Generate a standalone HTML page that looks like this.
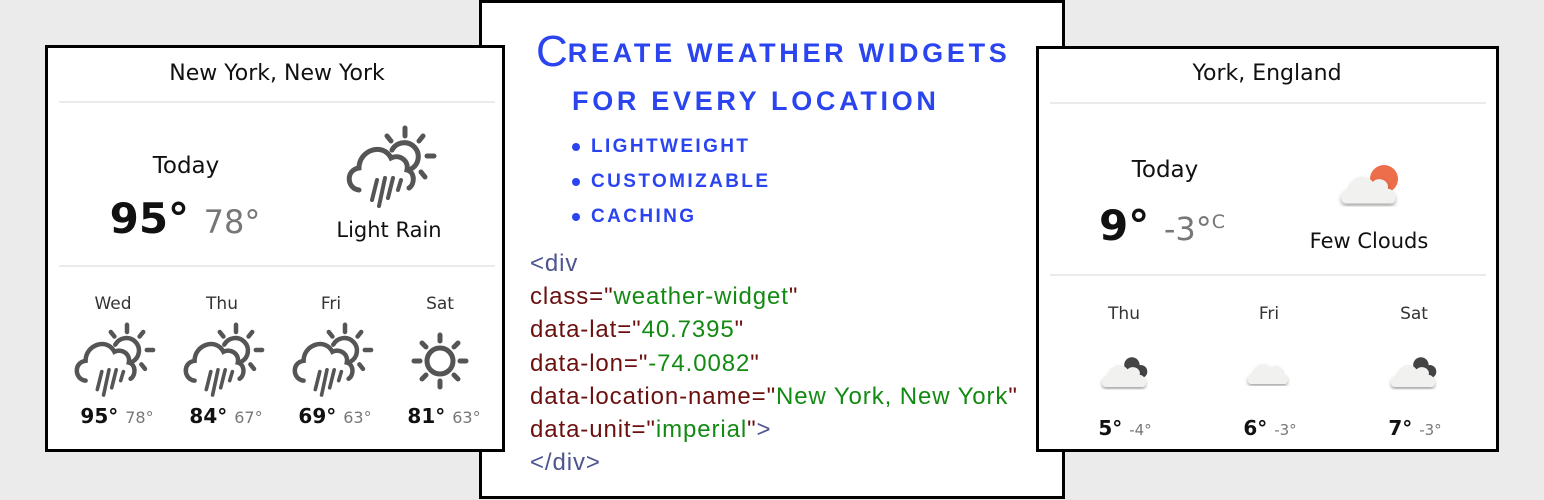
<!DOCTYPE html>
<html><head><meta charset="utf-8"><style>
*{margin:0;padding:0;box-sizing:border-box}
body{width:1544px;height:500px;background:#ebebeb;position:relative;overflow:hidden;font-family:"DejaVu Sans","Liberation Sans",sans-serif}
.card{position:absolute;background:#fff;border:3px solid #000}
.t{position:absolute;white-space:nowrap;transform:translateX(-50%);color:#111}
.sep{position:absolute;height:2px;background:#ebebeb}
svg{position:absolute;overflow:visible}
.mid{font-family:"Liberation Sans",sans-serif}
.mid .ttl{position:absolute;color:#2a44f0;font-weight:bold;white-space:nowrap;letter-spacing:3.7px}
.bul{position:absolute;left:109px;color:#2a44f0;font-weight:bold;font-size:19px;letter-spacing:2.4px}
.bul:before{content:"";position:absolute;left:-19px;top:7px;width:8px;height:8px;border-radius:50%;background:#2a44f0}
.code{position:absolute;left:48px;top:244px;font-size:24px;line-height:33.2px;color:#6b0f0f;letter-spacing:0.9px}
.tg{color:#4c5491}.s{color:#138a13}
.g{color:#777;font-weight:normal}
</style></head><body>
<svg width="0" height="0" style="position:absolute">
<defs>
<g id="rain" fill="none" stroke="#555" stroke-linecap="round">
<path d="M47 24 A14 14 0 1 1 66 43" stroke-width="5"/>
<path d="M60 2 V10 M42 10 L46 15 M78 10 L74 15 M82 30 H89 M76 46 L80 51" stroke-width="5"/>
<path d="M14 64 C2 63 0 44 14 42 C14 24 38 16 46 32 C54 28 64 34 62 44 C70 46 70 58 64 62" stroke-width="5"/>
<path d="M32 54 L27 74 M40 52 L34 80 M48 52 L43 72 M56 54 L53 64" stroke-width="4"/>
</g>
<g id="sun" fill="none" stroke="#555" stroke-linecap="round" stroke-width="5">
<circle cx="40" cy="40" r="13"/>
<path d="M40 14V20 M40 60V66 M14 40H20 M60 40H66 M22 22L26 26 M58 22L54 26 M22 58L26 54 M58 58L54 54"/>
</g>
<filter id="sh"><feDropShadow dx="0" dy="2" stdDeviation="1.5" flood-opacity="0.35"/></filter>
<g id="cl" filter="url(#sh)"><path d="M6 30 C0 30 0 20 8 19 C9 10 20 7 25 14 C30 9 38 14 36 19 C42 19 44 30 38 30 Z" fill="#f1f1ef"/></g>
<g id="cld"><circle cx="29" cy="10" r="7" fill="#444"/><circle cx="37" cy="16" r="6" fill="#444"/></g>
</defs></svg>

<div class="card mid" style="left:479px;top:0;width:586px;height:499px">
<div class="ttl" style="left:54px;top:20px;font-size:27px"><span style="font-size:44px;font-weight:normal;position:relative;top:4px;letter-spacing:0">C</span>REATE WEATHER WIDGETS</div>
<div class="ttl" style="left:90px;top:83px;font-size:27px">FOR EVERY LOCATION</div>
<div class="bul" style="top:133px">LIGHTWEIGHT</div>
<div class="bul" style="top:168px">CUSTOMIZABLE</div>
<div class="bul" style="top:203px">CACHING</div>
<div class="code"><span class="tg">&lt;div</span><br>class="<span class="s">weather-widget</span>"<br>data-lat="<span class="s">40.7395</span>"<br>data-lon="<span class="s">-74.0082</span>"<br>data-location-name="<span class="s">New York, New York</span>"<br>data-unit="<span class="s">imperial</span>"<span class="tg">&gt;</span><br><span class="tg">&lt;/div&gt;</span></div>
</div>

<div class="card" style="left:45px;top:45px;width:460px;height:407px">
<div class="t" style="left:229px;top:13px;font-size:22px">New York, New York</div>
<div class="sep" style="left:11px;top:53px;width:436px"></div>
<div class="t" style="left:138px;top:105px;font-size:23px">Today</div>
<div class="t" style="left:137px;top:146px;font-size:42px;font-weight:bold">95° <span class="g" style="font-size:32px">78°</span></div>
<svg style="left:297px;top:78px" width="90" height="82"><use href="#rain"/></svg>
<div class="t" style="left:341px;top:170px;font-size:21px">Light Rain</div>
<div class="sep" style="left:11px;top:217px;width:436px"></div>
<div class="t" style="left:65px;top:246px;font-size:17px;color:#333">Wed</div>
<div class="t" style="left:174px;top:246px;font-size:17px;color:#333">Thu</div>
<div class="t" style="left:283px;top:246px;font-size:17px;color:#333">Fri</div>
<div class="t" style="left:392px;top:246px;font-size:17px;color:#333">Sat</div>
<svg style="left:25px;top:275px" width="90" height="82"><g transform="scale(0.9)"><use href="#rain"/></g></svg>
<svg style="left:134px;top:275px" width="90" height="82"><g transform="scale(0.9)"><use href="#rain"/></g></svg>
<svg style="left:243px;top:275px" width="90" height="82"><g transform="scale(0.9)"><use href="#rain"/></g></svg>
<svg style="left:352px;top:273px" width="80" height="80"><use href="#sun"/></svg>
<div class="t" style="left:69px;top:356px;font-size:20px;font-weight:bold">95° <span class="g" style="font-size:16px">78°</span></div>
<div class="t" style="left:178px;top:356px;font-size:20px;font-weight:bold">84° <span class="g" style="font-size:16px">67°</span></div>
<div class="t" style="left:287px;top:356px;font-size:20px;font-weight:bold">69° <span class="g" style="font-size:16px">63°</span></div>
<div class="t" style="left:396px;top:356px;font-size:20px;font-weight:bold">81° <span class="g" style="font-size:16px">63°</span></div>
</div>

<div class="card" style="left:1036px;top:46px;width:463px;height:406px">
<div class="t" style="left:228px;top:12px;font-size:22px">York, England</div>
<div class="sep" style="left:11px;top:53px;width:436px"></div>
<div class="t" style="left:126px;top:108px;font-size:23px">Today</div>
<div class="t" style="left:123px;top:152px;font-size:42px;font-weight:bold">9° <span class="g" style="font-size:32px">-3°<span style="font-size:19px;vertical-align:12px">C</span></span></div>
<svg style="left:300px;top:110px" width="70" height="50"><circle cx="45" cy="20" r="14" fill="#ec6e4a"/><g transform="translate(0,4) scale(1.35)"><use href="#cl"/></g></svg>
<div class="t" style="left:330px;top:180px;font-size:21px">Few Clouds</div>
<div class="sep" style="left:11px;top:225px;width:436px"></div>
<div class="t" style="left:85px;top:255px;font-size:17px;color:#333">Thu</div>
<div class="t" style="left:230px;top:255px;font-size:17px;color:#333">Fri</div>
<div class="t" style="left:375px;top:255px;font-size:17px;color:#333">Sat</div>
<svg style="left:61px;top:305px" width="60" height="45"><g transform="scale(1.1)"><use href="#cld"/><use href="#cl"/></g></svg>
<svg style="left:207px;top:305px" width="60" height="45"><g transform="scale(1.0)"><use href="#cl"/></g></svg>
<svg style="left:350px;top:305px" width="60" height="45"><g transform="scale(1.1)"><use href="#cld"/><use href="#cl"/></g></svg>
<div class="t" style="left:86px;top:367px;font-size:20px;font-weight:bold">5° <span class="g" style="font-size:15px">-4°</span></div>
<div class="t" style="left:231px;top:367px;font-size:20px;font-weight:bold">6° <span class="g" style="font-size:15px">-3°</span></div>
<div class="t" style="left:376px;top:367px;font-size:20px;font-weight:bold">7° <span class="g" style="font-size:15px">-3°</span></div>
</div>
</body></html>
